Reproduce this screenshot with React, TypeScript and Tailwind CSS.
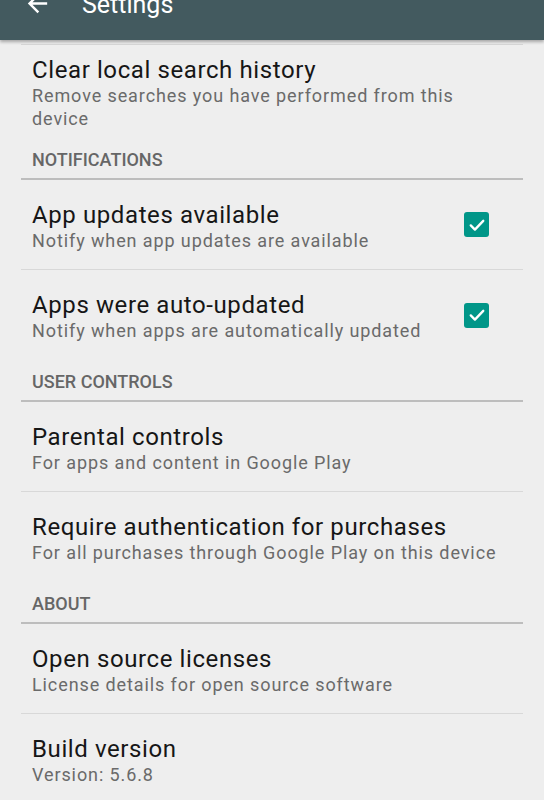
import React from "react";

function Check() {
  return (
    <div className="w-[25px] h-[25px] -mt-[4px] rounded-[3px] bg-[#009688] flex items-center justify-center shrink-0">
      <svg width="20" height="20" viewBox="0 0 24 24" fill="none">
        <path d="M4.5 12.5l5 5 10-10.5" stroke="white" strokeWidth="2.8" strokeLinecap="round" strokeLinejoin="round" />
      </svg>
    </div>
  );
}

function Row({
  title,
  sub,
  checked,
  border = true,
  tall = false,
}: {
  title: string;
  sub: React.ReactNode;
  checked?: boolean;
  border?: boolean;
  tall?: boolean;
}) {
  return (
    <div
      className={
        "flex items-center pl-[11px] pr-[34px] pt-[4px] " +
        (tall ? "h-[93px] " : "h-[90px] ") +
        (border ? "border-b border-[#d8d8d8]" : "")
      }
    >
      <div className="flex-1 min-w-0">
        <div className="whitespace-nowrap text-[24px] leading-[27px] text-[#161616] tracking-[0.6px]">{title}</div>
        <div className="whitespace-nowrap text-[18px] leading-[23px] text-[#6a6a6a] tracking-[0.9px]">{sub}</div>
      </div>
      {checked ? <Check /> : null}
    </div>
  );
}

function Category({ label }: { label: string }) {
  return (
    <div className="h-[42px] border-b-2 border-[#bdbdbd] pl-[11px] pt-[2px] flex items-center text-[18px] font-medium text-[#666666]">
      {label}
    </div>
  );
}

export default function App() {
  return (
    <div
      className="w-[544px] h-[800px] overflow-hidden bg-[#eeeeee]"
      style={{ fontFamily: "Roboto, 'Noto Sans', sans-serif" }}
    >
      <header className="relative z-10 h-[40px] bg-[#435a5f] shadow-[0_2px_3px_rgba(0,0,0,0.3)] overflow-hidden">
        <div className="-mt-[25px] h-[56px] flex items-center">
          <svg className="ml-[23px]" width="29" height="29" viewBox="0 0 24 24" fill="white">
            <path d="M20 11H7.83l5.59-5.59L12 4l-8 8 8 8 1.41-1.41L7.83 13H20v-2z" />
          </svg>
          <span className="ml-[30px] pt-[3px] text-white text-[25px] leading-none">Settings</span>
        </div>
      </header>
      <div className="pl-[21px] pr-[21px] pt-[4px]">
        <div className="h-px bg-[#d8d8d8]" />
        <Row
          tall
          border={false}
          title="Clear local search history"
          sub={<>Remove searches you have performed from this<br />device</>}
        />
        <Category label="NOTIFICATIONS" />
        <Row title="App updates available" sub="Notify when app updates are available" checked />
        <Row title="Apps were auto-updated" sub="Notify when apps are automatically updated" checked border={false} />
        <Category label="USER CONTROLS" />
        <Row title="Parental controls" sub="For apps and content in Google Play" />
        <Row
          title="Require authentication for purchases"
          sub="For all purchases through Google Play on this device"
          border={false}
        />
        <Category label="ABOUT" />
        <Row title="Open source licenses" sub="License details for open source software" />
        <Row title="Build version" sub="Version: 5.6.8" border={false} />
      </div>
    </div>
  );
}
